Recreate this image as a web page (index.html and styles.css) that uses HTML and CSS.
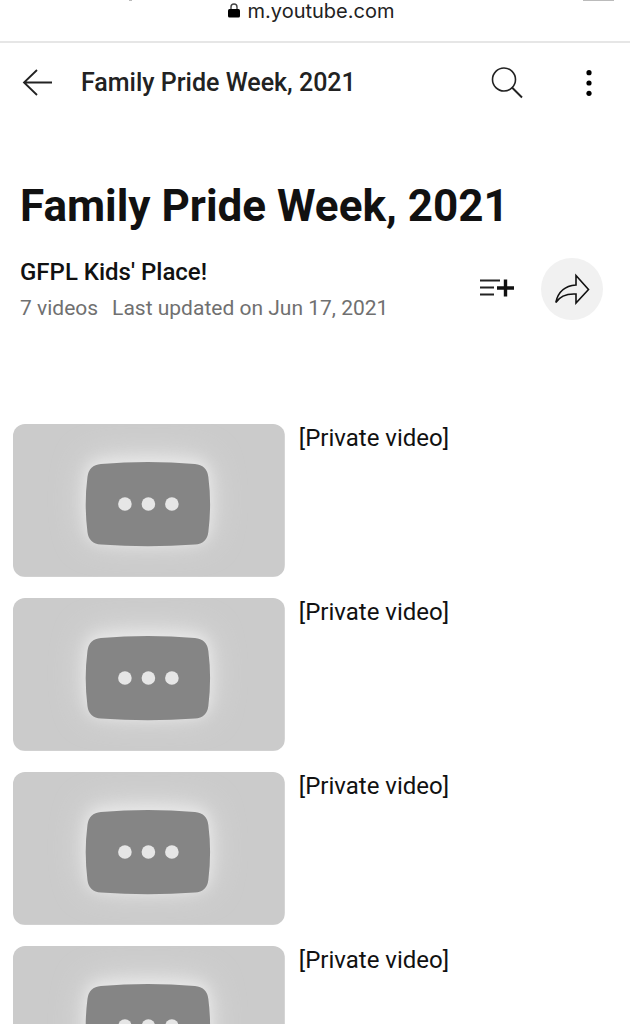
FILE: index.html
```html
<!DOCTYPE html>
<html lang="en">
<head>
    <meta charset="UTF-8">
    <meta name="viewport" content="width=device-width, initial-scale=1.0">
    <title>Family Pride Week, 2021</title>
    <link rel="stylesheet" href="styles.css">
</head>
<body>
    <!-- Browser address bar -->
    <div class="address-bar">
        <svg class="lock" viewBox="0 0 12 15" aria-hidden="true">
            <path d="M3 7V4a3 3 0 0 1 6 0v3" fill="none" stroke="#444" stroke-width="1.4"/>
            <rect x="0" y="6" width="12" height="8.5" rx="1.5" fill="#000"/>
        </svg>
        <span>m.youtube.com</span>
        <span class="bar-speck"></span>
        <span class="bar-mark"></span>
    </div>

    <header class="top-bar">
        <button class="icon-button" aria-label="Back">
            <svg width="32" height="32" viewBox="0 0 32 32">
                <path d="M17 3L4 15.5l13 12.500M4 15.5H32" fill="none" stroke="#222" stroke-width="1.8"/>
            </svg>
        </button>
        <span class="bar-title">Family Pride Week, 2021</span>
        <button class="icon-button" aria-label="Search">
            <svg width="32" height="32" viewBox="0 0 32 32">
                <circle cx="13" cy="12.5" r="11.5" fill="none" stroke="#222" stroke-width="1.6"/>
                <path d="M21 20.5l10 10" stroke="#222" stroke-width="1.9"/>
            </svg>
        </button>
        <button class="icon-button menu-button" aria-label="Menu">
            <svg width="8" height="32" viewBox="0 0 8 32">
                <circle cx="4" cy="5.7" r="2.6"/>
                <circle cx="4" cy="16" r="2.6"/>
                <circle cx="4" cy="26.3" r="2.6"/>
            </svg>
        </button>
    </header>

    <main>
        <section class="playlist-header">
            <h1>Family Pride Week, 2021</h1>
            <div class="playlist-row">
                <div class="playlist-info">
                    <a class="owner" href="#">GFPL Kids' Place!</a>
                    <div class="stats">
                        <span>7 videos</span>
                        <span>Last updated on Jun 17, 2021</span>
                    </div>
                </div>
                <button class="icon-button" aria-label="Save playlist">
                    <svg width="36" height="20" viewBox="0 0 36 20">
                        <path d="M1 1.5h20M1 8.5h14M1 15.5h14" stroke="#222" stroke-width="1.8"/>
                        <path d="M18 9h17M26.5 .5v17" stroke="#111" stroke-width="3.4"/>
                    </svg>
                </button>
                <button class="share-button" aria-label="Share">
                    <svg width="36" height="32" viewBox="0 0 36 32">
                        <path d="M22 2.5L34.5 16.500 22 30V21C13.500 20.500 6 23 1.800 29.500 4 19 11 12.800 22 12Z" fill="none" stroke="#111" stroke-width="1.6"/>
                    </svg>
                </button>
            </div>
        </section>

        <ul class="video-list">
            <li class="video">
                <svg class="thumb" viewBox="0 0 272 153" aria-hidden="true">
                    <defs>
                        <filter id="wide-glow" x="-60%" y="-80%" width="220%" height="260%">
                            <feGaussianBlur stdDeviation="16"/>
                        </filter>
                        <filter id="near-glow" x="-30%" y="-40%" width="160%" height="180%">
                            <feGaussianBlur stdDeviation="7"/>
                        </filter>
                        <path id="tv" d="M88 40Q135 36 182 40Q194 41 195.500 53Q199 80 195.500 108Q194 120 182 120.500Q135 124 88 120.500Q76 120 74.500 108Q71 80 74.500 53Q76 41 88 40Z"/>
                        <g id="private-thumb">
                            <rect width="272" height="153" fill="#cbcbcb"/>
                            <use href="#tv" y="-5" fill="#e4e4e4" filter="url(#wide-glow)"/>
                            <use href="#tv" y="-3" fill="#e8e8e8" filter="url(#near-glow)"/>
                            <use href="#tv" fill="#858585"/>
                            <g fill="#e6e6e6">
                                <circle cx="112" cy="80" r="6.8"/>
                                <circle cx="135.5" cy="80" r="6.8"/>
                                <circle cx="159" cy="80" r="6.8"/>
                            </g>
                        </g>
                    </defs>
                    <use href="#private-thumb"/>
                </svg>
                <h2>[Private video]</h2>
            </li>
            <li class="video">
                <svg class="thumb" viewBox="0 0 272 153" aria-hidden="true"><use href="#private-thumb"/></svg>
                <h2>[Private video]</h2>
            </li>
            <li class="video">
                <svg class="thumb" viewBox="0 0 272 153" aria-hidden="true"><use href="#private-thumb"/></svg>
                <h2>[Private video]</h2>
            </li>
            <li class="video">
                <svg class="thumb" viewBox="0 0 272 153" aria-hidden="true"><use href="#private-thumb"/></svg>
                <h2>[Private video]</h2>
            </li>
        </ul>
    </main>
</body>
</html>
```
FILE: styles.css
```css
* {
    margin: 0;
    padding: 0;
    box-sizing: border-box;
}

html {
    scrollbar-width: none;
}

body {
    background: #fff;
    color: #111;
    font-family: Roboto, sans-serif;
}

button {
    border: none;
    background: none;
    cursor: pointer;
}

svg {
    display: block;
}

.address-bar {
    position: relative;
    display: flex;
    justify-content: center;
    gap: 8px;
    height: 43px;
    padding-right: 8px;
    border-bottom: 2px solid #e6e6e6;
    color: #222;
    font-family: Inter, sans-serif;
    font-size: 20px;
    line-height: 22px;
}

.lock {
    width: 12px;
    height: 15px;
    margin-top: 3px;
}

/* bottom edges of the buttons scrolled out above the bar */
.bar-mark,
.bar-speck {
    position: absolute;
    top: 0;
    right: 16px;
    width: 31px;
    height: 1px;
    background: #bbb;
}

.bar-speck {
    left: 129px;
    width: 3px;
}

.top-bar {
    display: flex;
    align-items: center;
    height: 80px;
    padding: 0 20px;
}

.icon-button {
    flex: none;
}

.bar-title {
    flex: 1;
    margin-left: 29px;
    font-size: 25px;
    font-weight: 500;
    line-height: 32px;
    color: #222;
}

.menu-button {
    margin: 0 17px 0 62px;
}

.playlist-header {
    padding: 57px 27px 0 20px;
}

h1 {
    font-size: 44px;
    font-weight: 700;
    line-height: 52px;
}

.playlist-row {
    display: flex;
    align-items: center;
    gap: 26px;
    margin-top: 24px;
}

.playlist-info {
    flex: 1;
}

.owner {
    display: block;
    color: #111;
    font-size: 24px;
    font-weight: 500;
    line-height: 32px;
    text-decoration: none;
}

.stats {
    display: flex;
    gap: 14px;
    margin-top: 6px;
    color: #707070;
    font-size: 21px;
    line-height: 28px;
}

.share-button {
    display: flex;
    align-items: center;
    justify-content: center;
    width: 62px;
    height: 62px;
    border-radius: 50%;
    background: #f1f1f1;
}

.video-list {
    display: flex;
    flex-direction: column;
    gap: 21px;
    margin-top: 102px;
    padding: 0 13px;
    list-style: none;
}

.video {
    display: flex;
    align-items: flex-start;
    gap: 14px;
}

.thumb {
    flex: none;
    width: 45%;
    border-radius: 12px;
}

h2 {
    font-size: 24px;
    font-weight: 400;
    line-height: 28px;
}
```
